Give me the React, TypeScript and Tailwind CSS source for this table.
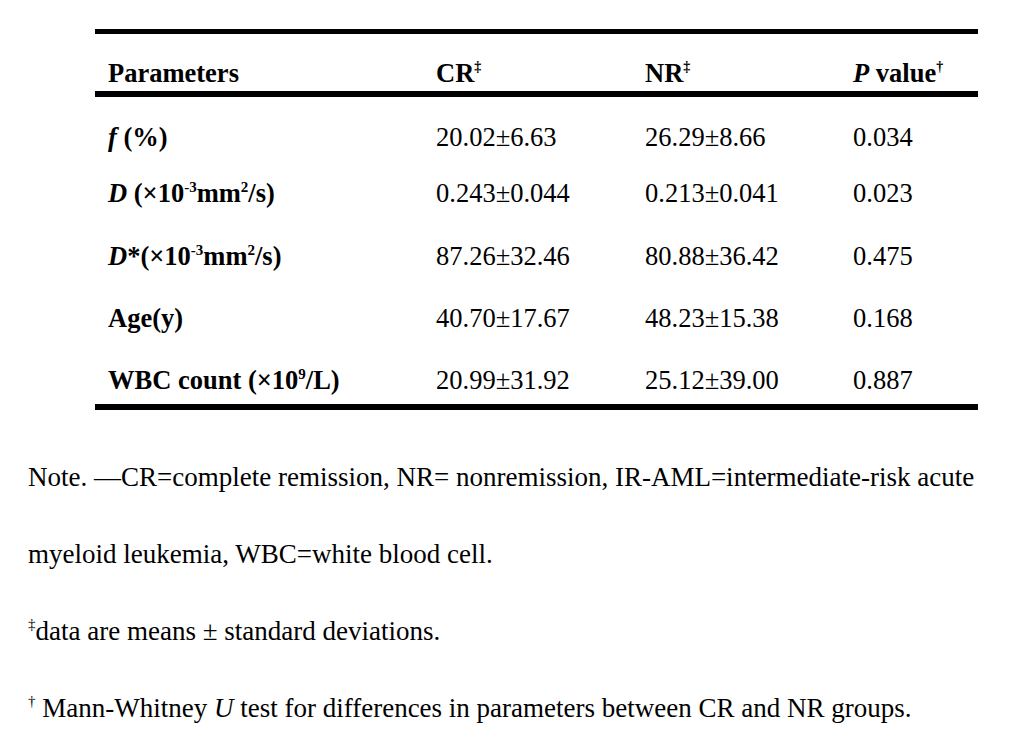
const rows = [
  { cr: "20.02±6.63", nr: "26.29±8.66", p: "0.034", mt: "mt-[25px]" },
  { cr: "0.243±0.044", nr: "0.213±0.041", p: "0.023", mt: "mt-[26px]" },
  { cr: "87.26±32.46", nr: "80.88±36.42", p: "0.475", mt: "mt-[33px]" },
  { cr: "40.70±17.67", nr: "48.23±15.38", p: "0.168", mt: "mt-[32px]" },
  { cr: "20.99±31.92", nr: "25.12±39.00", p: "0.887", mt: "mt-[32px]" },
];

const labels = [
  <>
    <i>f</i> (%)
  </>,
  <>
    <i>D</i> (×10<sup className="text-[15px] -top-[10px]">-3</sup>mm<sup className="text-[15px] -top-[10px]">2</sup>/s)
  </>,
  <>
    <i>D</i>*(×10<sup className="text-[15px] -top-[10px]">-3</sup>mm<sup className="text-[15px] -top-[10px]">2</sup>/s)
  </>,
  <>Age(y)</>,
  <>
    WBC count (×10<sup className="text-[15px] -top-[10px]">9</sup>/L)
  </>,
];

const App = () => {
  return (
    <div className="min-h-screen w-[1030px] bg-white text-black font-['Liberation_Serif',serif] text-[26.5px]">
      <div className="pt-[29px] pl-[95px] w-[978px]">
        <div className="border-t-[5px] border-b-[6px] border-black">
          <div className="grid grid-cols-[328px_209px_208px_1fr] pl-[13px] pt-[24px] pb-[3px] leading-[30px] font-bold">
            <div>Parameters</div>
            <div>
              CR<sup className="text-[14px] -top-[11px]">‡</sup>
            </div>
            <div>
              NR<sup className="text-[14px] -top-[11px]">‡</sup>
            </div>
            <div>
              <i>P</i> value<sup className="text-[14px] -top-[11px]">†</sup>
            </div>
          </div>
        </div>
        <div className="border-b-[6px] border-black pb-[9px]">
          {rows.map((r, i) => (
            <div
              key={i}
              className={`grid grid-cols-[328px_209px_208px_1fr] pl-[13px] leading-[30px] ${r.mt}`}
            >
              <div className="font-bold">{labels[i]}</div>
              <div>{r.cr}</div>
              <div>{r.nr}</div>
              <div>{r.p}</div>
            </div>
          ))}
        </div>
      </div>

      <div className="pl-[28px] pt-[29px] w-[1000px] text-[27px] leading-[77px]">
        <p>
          Note. —CR=complete remission, NR= nonremission, IR-AML=intermediate-risk acute myeloid leukemia,
          WBC=white blood cell.
        </p>
        <p>
          <sup className="text-[15px] -top-[11px]">‡</sup>data are means ± standard deviations.
        </p>
        <p>
          <sup className="text-[15px] -top-[11px]">†</sup> Mann-Whitney <i>U</i> test for differences in
          parameters between CR and NR groups.
        </p>
      </div>
    </div>
  );
};

export default App;
